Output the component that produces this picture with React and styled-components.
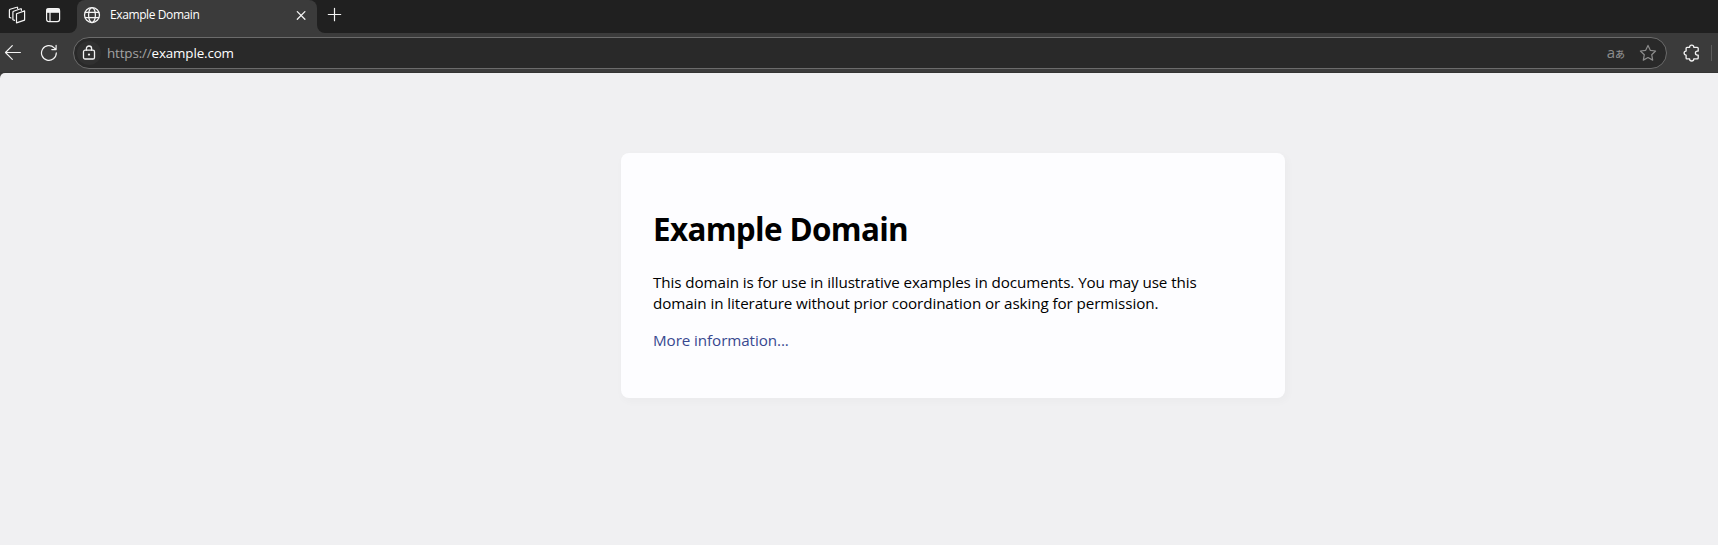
import React from "react";
import styled, { createGlobalStyle } from "styled-components";

const GlobalStyle = createGlobalStyle`
  body {
    margin: 0;
    overflow: hidden;
    font-family: "Open Sans", "Noto Sans", "Noto Sans CJK JP", sans-serif;
  }
`;

const Browser = styled.div`
  display: flex;
  flex-direction: column;
  height: 545px;
  overflow: hidden;
  background: #3b3b3b;
`;

const TabStrip = styled.div`
  display: flex;
  align-items: flex-start;
  height: 33px;
  background: #3b3b3b;
`;

const StripEdge = styled.div`
  display: flex;
  box-sizing: border-box;
  height: 33px;
  background: #202020;
`;

const LeadingEdge = styled(StripEdge)`
  width: 77px;
  padding: 6px 0 0 8px;
  gap: 18px;
  border-bottom-right-radius: 8px;
`;

const TrailingEdge = styled(StripEdge)`
  flex: 1;
  padding: 5px 0 0 8px;
  border-bottom-left-radius: 8px;
`;

const TabSlot = styled.div`
  width: 240px;
  height: 33px;
  background: linear-gradient(#202020 50%, #3b3b3b 50%);
`;

const Tab = styled.div`
  display: flex;
  align-items: center;
  box-sizing: border-box;
  height: 33px;
  padding: 0 7px 3px 6px;
  background: #3b3b3b;
  border-radius: 8px 8px 0 0;
`;

const TabTitle = styled.span`
  flex: 1;
  margin-left: 9px;
  font-size: 12px;
  line-height: 18px;
  letter-spacing: -0.4px;
  color: #fff;
`;

const Icon = styled.svg`
  flex: none;
  display: block;
  width: ${(p) => p.$size || 18}px;
  height: ${(p) => p.$size || 18}px;
  fill: none;
  stroke: ${(p) => p.$color || "#f4f4f4"};
  stroke-width: ${(p) => p.$weight || 1.2};
  stroke-linecap: round;
  stroke-linejoin: round;
`;

const Toolbar = styled.div`
  display: flex;
  align-items: center;
  box-sizing: border-box;
  height: 40px;
  padding: 0 6px 0 4px;
  border-bottom: 1px solid #343434;
`;

const NavButtons = styled.div`
  display: flex;
  gap: 18px;
  width: 69px;
`;

const AddressBar = styled.div`
  display: flex;
  align-items: center;
  box-sizing: border-box;
  width: 1594px;
  height: 32px;
  padding: 0 9px 0 3px;
  border: 1px solid #6b6b6b;
  border-radius: 16px;
  background: #292929;
`;

const SiteBadge = styled.span`
  display: grid;
  place-items: center;
  width: 24px;
  height: 24px;
  border-radius: 50%;
  background: #303030;
`;

const Url = styled.span`
  flex: 1;
  margin-left: 6px;
  font-size: 13.4px;
  line-height: 20px;
  letter-spacing: -0.14px;
  color: #fff;
`;

const Scheme = styled.span`
  color: #a3a3a3;
`;

const Translate = styled.span`
  display: flex;
  align-items: baseline;
  margin-right: 14px;
  font-size: 15px;
  line-height: 18px;
  color: #8c8c8c;
`;

const Kana = styled.span`
  font-family: "Noto Sans CJK JP", sans-serif;
  font-size: 10px;
  font-weight: 500;
`;

const Extensions = styled.div`
  display: flex;
  align-items: center;
  flex: 1;
  padding-left: 15px;
`;

const Divider = styled.span`
  width: 1px;
  height: 16px;
  margin-left: 11px;
  background: #5c5c5c;
`;

const Page = styled.main`
  flex: 1;
  display: flex;
  align-items: flex-start;
  padding: 80px 0 0 621px;
  border-top-left-radius: 5px;
  background: #f0f0f2;
`;

const Card = styled.section`
  box-sizing: border-box;
  width: 664px;
  height: 245px;
  padding: 32px;
  border-radius: 8px;
  background: #fdfdff;
  box-shadow: 2px 3px 7px 2px rgba(0, 0, 0, 0.02);
`;

const Heading = styled.h1`
  margin: 22px 0 21px;
  font-size: 31.4px;
  line-height: 44px;
  letter-spacing: -0.66px;
  color: #000;
`;

const Paragraph = styled.p`
  margin: 0 0 16px;
  font-size: 15.2px;
  line-height: 21px;
  letter-spacing: -0.08px;
  color: #000;
  white-space: nowrap;
`;

const Link = styled.a`
  color: #38488f;
  text-decoration: none;
`;

const WorkspacesIcon = () => (
  <Icon viewBox="0 0 18 18" $weight={1.2}>
    <path d="m8.5 7.7 8.1-2.8v9.2l-8.1 2.8z" />
    <path d="m6.6 14.4-1.7-.6V6.3c0-.5.2-.8.7-1l7-2.5c.5-.2.8 0 .8.5v1" />
    <path d="m3 12-1.6-.6V4.3c0-.5.2-.8.7-1l6.7-2.1c.5-.2.8 0 .8.4v.8" />
  </Icon>
);

const TabMenuIcon = () => (
  <Icon viewBox="0 0 18 18" $weight={1.2}>
    <rect x="2.6" y="2.6" width="13" height="13" rx="2.4" />
    <path d="M3 3.2h12.2v3H3z" fill="#f4f4f4" />
    <path d="M6 6v9.4" />
  </Icon>
);

const GlobeIcon = () => (
  <Icon viewBox="0 0 18 18" $weight={1.25}>
    <circle cx="9" cy="9" r="7.5" />
    <ellipse cx="9" cy="9" rx="3.4" ry="7.5" />
    <path d="M2.3 6.3h13.4M2.3 11.7h13.4" />
  </Icon>
);

const CloseIcon = () => (
  <Icon viewBox="0 0 18 18" $weight={1.3}>
    <path d="m5.3 5.6 7.6 7.6m0-7.6-7.6 7.6" />
  </Icon>
);

const PlusIcon = () => (
  <Icon viewBox="0 0 19 19" $size={19} $weight={1.2}>
    <path d="M9.5 3.3v12.4M3.3 9.5h12.4" />
  </Icon>
);

const BackIcon = () => (
  <Icon viewBox="0 0 18 18" $weight={1.2}>
    <path d="M16.4 8.5H1.5M8.3 1.7 1.5 8.5l6.8 6.8" />
  </Icon>
);

const ReloadIcon = () => (
  <Icon viewBox="0 0 18 18" $weight={1.2}>
    <path d="M16.3 8.9a7.4 7.4 0 1 1-2.1-5.1l1.7 1.7M16.1 1.3v4.3h-4.3" />
  </Icon>
);

const LockIcon = () => (
  <Icon viewBox="0 0 18 18" $weight={1.3}>
    <rect x="3.5" y="6.2" width="11" height="8.8" rx="1.6" />
    <path d="M6.4 6.2V4.6a2.6 2.6 0 0 1 5.2 0v1.6" />
    <circle cx="9" cy="10.6" r=".5" fill="#f4f4f4" />
  </Icon>
);

const StarIcon = () => (
  <Icon viewBox="0 0 18 18" $color="#8c8c8c" $weight={1.2}>
    <path d="m9 1.4 2.3 4.9 5.3.7-3.9 3.7 1 5.4L9 13.5l-4.7 2.6 1-5.4L1.4 7l5.3-.7z" />
  </Icon>
);

const PuzzleIcon = () => (
  <Icon viewBox="0 0 18 18" $weight={1.3}>
    <path d="M5 3.3h2.6a2.1 2.1 0 0 1 4.2 0h3.4q1 0 1 1v2.8h-.8a2 2 0 0 0 0 4h.8v2.8q0 1-1 1h-3.4a2.1 2.1 0 0 1-4.2 0H5q-.9 0-.9-1v-2.8a2 2 0 0 1 0-4V4.3q0-1 .9-1z" />
  </Icon>
);

export default function App() {
  return (
    <Browser>
      <GlobalStyle />
      <TabStrip>
        <LeadingEdge>
          <WorkspacesIcon />
          <TabMenuIcon />
        </LeadingEdge>
        <TabSlot>
          <Tab>
            <GlobeIcon />
            <TabTitle>Example Domain</TabTitle>
            <CloseIcon />
          </Tab>
        </TabSlot>
        <TrailingEdge>
          <PlusIcon />
        </TrailingEdge>
      </TabStrip>
      <Toolbar>
        <NavButtons>
          <BackIcon />
          <ReloadIcon />
        </NavButtons>
        <AddressBar>
          <SiteBadge>
            <LockIcon />
          </SiteBadge>
          <Url>
            <Scheme>https://</Scheme>example.com
          </Url>
          <Translate>
            a<Kana>あ</Kana>
          </Translate>
          <StarIcon />
        </AddressBar>
        <Extensions>
          <PuzzleIcon />
          <Divider />
        </Extensions>
      </Toolbar>
      <Page>
        <Card>
          <Heading>Example Domain</Heading>
          <Paragraph>
            This domain is for use in illustrative examples in documents. You may use this
            <br />
            domain in literature without prior coordination or asking for permission.
          </Paragraph>
          <Paragraph>
            <Link>More information...</Link>
          </Paragraph>
        </Card>
      </Page>
    </Browser>
  );
}
